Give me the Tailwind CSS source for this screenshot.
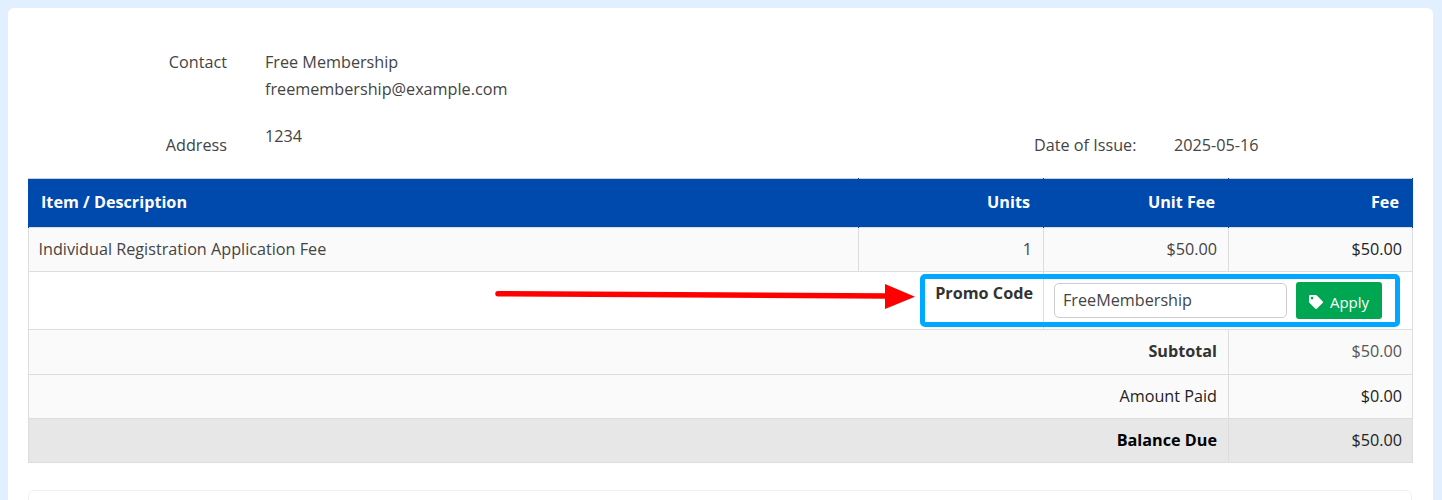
<!DOCTYPE html>
<html lang="en">
  <head>
    <meta charset="UTF-8" />
    <meta name="viewport" content="width=device-width, initial-scale=1.0" />
    <title>Invoice</title>
    <script src="https://cdn.jsdelivr.net/npm/@tailwindcss/browser@4"></script>
  </head>
  <body class="bg-[#e2efff] h-[500px] overflow-hidden font-['Open_Sans',sans-serif] text-[16.2px] text-[#444]">
    <div class="relative mx-2 mt-2 w-[1425px] h-[492px] overflow-hidden bg-white rounded-t-md px-5 pt-[41px]">
      <!-- contact block -->
      <div class="flex">
        <div class="w-[199px] text-right leading-[27px]">Contact</div>
        <div class="ml-[38px] leading-[27px]">
          <div>Free Membership</div>
          <div>freemembership@example.com</div>
        </div>
      </div>
      <div class="flex h-[54px] mt-[21px]">
        <div class="w-[199px] text-right pt-[8px] leading-[27px]">Address</div>
        <div class="ml-[38px] w-[769px] leading-[27px] -mt-[1px]">1234</div>
        <div class="w-[140px] pt-[8px] leading-[27px]">Date of Issue:</div>
        <div class="pt-[8px] leading-[27px]">2025-05-16</div>
      </div>

      <table class="w-[1384px] table-fixed border-collapse">
        <colgroup>
          <col class="w-[830px]" />
          <col class="w-[185px]" />
          <col class="w-[185px]" />
          <col class="w-[184px]" />
        </colgroup>
        <thead>
          <tr class="h-[49px] bg-[#004aad] text-white font-bold">
            <th class="text-left pl-[12px] pb-[2px] border-x border-[#004aad] border-t border-t-[#ccc]">Item / Description</th>
            <th class="text-right pr-[13px] pb-[2px] border-x border-[#004aad] border-t border-t-[#ccc]">Units</th>
            <th class="text-right pr-[13px] pb-[2px] border-x border-[#004aad] border-t border-t-[#ccc]">Unit Fee</th>
            <th class="text-right pr-[13px] pb-[2px] border-x border-[#004aad] border-t border-t-[#ccc]">Fee</th>
          </tr>
        </thead>
        <tbody>
          <tr class="h-[44px] bg-[#fafafa]">
            <td class="border border-[#ddd] pl-[9.5px]">Individual Registration Application Fee</td>
            <td class="border border-[#ddd] text-right pr-[11px]">1</td>
            <td class="border border-[#ddd] text-right pr-[11px]">$50.00</td>
            <td class="border border-[#ddd] text-right pr-[10px] text-[#222]">$50.00</td>
          </tr>
          <tr class="h-[58px] bg-white">
            <td colspan="2" class="border border-[#ddd] border-r-0 text-right align-top pt-[9px] pr-[10px] font-bold text-[#333]">Promo Code</td>
            <td colspan="2" class="border border-[#ddd]">
              <div class="flex items-center gap-[9px] pl-[10px]">
                <input type="text" value="FreeMembership" class="w-[233px] h-[35px] bg-white border border-[#ccc] rounded-[5px] px-2 pb-[2px] text-[#444] outline-none" />
                <button class="flex items-center justify-center gap-[7px] w-[86px] h-[37px] bg-[#00a651] text-white text-[15px] rounded-[3px]">
                  <svg class="w-[14px] h-[14px] mt-[2px]" viewBox="0 0 512 512" fill="currentColor"><path d="M0 252.1V48C0 21.5 21.5 0 48 0h204.1a48 48 0 0 1 33.9 14.1l211.9 211.9c18.7 18.7 18.7 49.1 0 67.9L293.8 497.9c-18.7 18.7-49.1 18.7-67.9 0L14.1 286.1A48 48 0 0 1 0 252.1zM112 64a48 48 0 1 0 0 96 48 48 0 0 0 0-96z" /></svg>
                  <span class="pt-[3px]">Apply</span>
                </button>
              </div>
            </td>
          </tr>
          <tr class="h-[45px] bg-[#fafafa]">
            <td colspan="3" class="border border-[#ddd] text-right pr-[11px] pb-[2px] font-bold text-[#333]">Subtotal</td>
            <td class="border border-[#ddd] text-right pr-[10px] pb-[2px] text-[#555]">$50.00</td>
          </tr>
          <tr class="h-[44px] bg-[#fafafa]">
            <td colspan="3" class="border border-[#ddd] text-right pr-[11px] text-[#222]">Amount Paid</td>
            <td class="border border-[#ddd] text-right pr-[10px] text-[#222]">$0.00</td>
          </tr>
          <tr class="h-[44px] bg-[#e7e7e7]">
            <td colspan="3" class="border border-[#ddd] text-right pr-[11px] font-bold text-black">Balance Due</td>
            <td class="border border-[#ddd] text-right pr-[10px] text-[#222]">$50.00</td>
          </tr>
        </tbody>
      </table>

      <div class="mt-[27px] w-[1384px] h-[60px] border border-[#f0f0f0] rounded-md"></div>

      <!-- annotation overlays -->
      <div class="absolute left-[912px] top-[266px] w-[480px] h-[53px] border-[5px] border-[#00a8ff] rounded-[5px]"></div>
      <svg class="absolute left-[480px] top-[270px]" width="440" height="40" viewBox="0 0 440 40">
        <path d="M10 15.7 L398 18" fill="none" stroke="#f00" stroke-width="5.5" stroke-linecap="round" />
        <path d="M397 6 L427 18.7 L397 31 Z" fill="#f00" />
      </svg>
    </div>
  </body>
</html>
